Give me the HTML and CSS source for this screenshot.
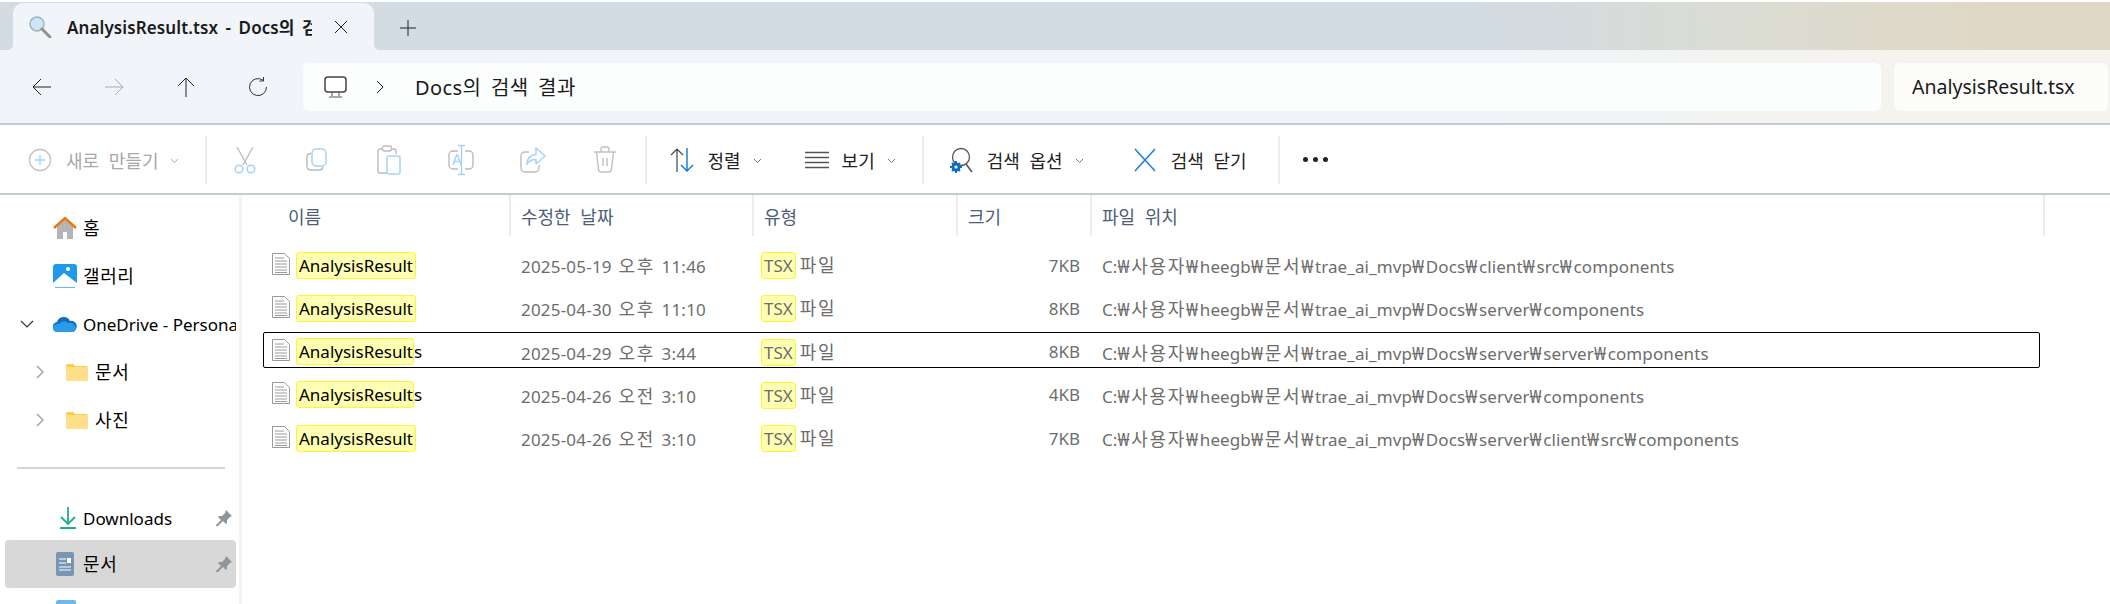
FILE: index.html
```html
<!DOCTYPE html>
<html lang="ko">
<head>
    <meta charset="UTF-8">
    <title>AnalysisResult.tsx - Docs의 검색 결과</title>
    <link rel="stylesheet" href="styles.css">
</head>
<body>
    <div class="tabbar">
        <div class="tab">
            <svg class="tab-icon" width="24" height="22" viewBox="0 0 24 22"><circle cx="9" cy="8" r="7" fill="#cfe6f5" stroke="#9fb4c2" stroke-width="1.5"/><path d="M14 13l8 8" stroke="#9a8f80" stroke-width="3" stroke-linecap="round"/></svg>
            <span class="tab-title">AnalysisResult.tsx - Docs의 검색 결과</span>
            <svg class="tab-close" width="14" height="14" viewBox="0 0 14 14"><path d="M1 1l12 12M13 1L1 13" stroke="#222" fill="none"/></svg>
        </div>
        <svg class="tab-add" width="16" height="16" viewBox="0 0 16 16"><path d="M8 0v16M0 8h16" stroke="#222" fill="none"/></svg>
    </div>

    <div class="addressbar">
        <svg class="nav-btn" width="20" height="18" viewBox="0 0 20 18"><path d="M19 9H1M9 1L1 9l8 8" stroke="#222" fill="none"/></svg>
        <svg class="nav-btn" width="20" height="18" viewBox="0 0 20 18"><path d="M1 9h18M11 1l8 8-8 8" stroke="#aaa" fill="none"/></svg>
        <svg class="nav-btn" width="20" height="20" viewBox="0 0 20 20"><path d="M10 20V1M2 9l8-8 8 8" stroke="#222" fill="none"/></svg>
        <svg class="nav-btn" width="20" height="20" viewBox="0 0 20 20"><path d="M15 3.2A8.5 8.5 0 1 0 18.5 10M15.5 0v4h-4" stroke="#333" fill="none"/></svg>
        <div class="path-box">
            <svg class="pc-icon" width="24" height="22" viewBox="0 0 24 22"><rect x="1" y="1" width="21" height="15" rx="3" fill="#fff" stroke="#444" stroke-width="1.5"/><path d="M8 16v4M15 16v4M5 21h13" stroke="#555" fill="none"/></svg>
            <svg class="crumb-arrow" width="8" height="14" viewBox="0 0 8 14"><path d="M1 1l6 6-6 6" stroke="#222" fill="none"/></svg>
            <span class="path-text">Docs의 검색 결과</span>
        </div>
        <div class="search-box">AnalysisResult.tsx</div>
    </div>

    <div class="commandbar">
        <div class="cmd new-cmd disabled">
            <svg width="24" height="24" viewBox="0 0 24 24"><circle cx="12" cy="12" r="10.5" fill="none" stroke="#c4c4c4" stroke-width="1.4"/><path d="M12 7v10M7 12h10" stroke="#a6d2f5" stroke-width="1.4"/></svg>
            <span class="cmd-label">새로 만들기</span>
            <svg class="caret" width="9" height="6" viewBox="0 0 9 6"><path d="M1 1l3.500 3.500L8 1" stroke="#aaa" fill="none"/></svg>
        </div>
        <div class="sep first-sep"></div>
        <div class="tools">
            <svg width="22" height="28" viewBox="0 0 22 28"><path d="M3 1l10 18M19 1L9 19" stroke="#bbb" stroke-width="1.3" fill="none"/><circle cx="5" cy="23" r="3.800" fill="none" stroke="#a6d2f5" stroke-width="1.5"/><circle cx="17" cy="23" r="3.800" fill="none" stroke="#a6d2f5" stroke-width="1.5"/></svg>
            <svg width="24" height="24" viewBox="0 0 24 24"><path d="M6 5.500C3 5.500 2 7 2 9v9c0 3 2 4 4 4h8c2 0 3.500-1 4-3" stroke="#bbb" stroke-width="1.4" fill="none"/><rect x="7" y="1" width="14" height="17" rx="4" fill="#fff" stroke="#a6d2f5" stroke-width="1.5"/></svg>
            <svg width="24" height="30" viewBox="0 0 24 30"><path d="M5 4H3a2 2 0 0 0-2 2v20a2 2 0 0 0 2 2h7M15 4h2a2 2 0 0 1 2 2v3" stroke="#bbb" stroke-width="1.4" fill="none"/><rect x="5.500" y="1" width="9" height="5" rx="2" fill="#fff" stroke="#bbb" stroke-width="1.3"/><rect x="10" y="11" width="13" height="18" rx="2" fill="#fff" stroke="#a6d2f5" stroke-width="1.5"/></svg>
            <svg width="26" height="32" viewBox="0 0 26 32"><path d="M10 7H5a4 4 0 0 0-4 4v10a4 4 0 0 0 4 4h5M17 7h4a4 4 0 0 1 4 4v10a4 4 0 0 1-4 4h-4" stroke="#bbb" stroke-width="1.4" fill="none"/><path d="M13.500 2v28M10 1.500h7M10 30.500h7M5 21l3.500-10h1l3.500 10M6.500 17.500h5" stroke="#a6d2f5" stroke-width="1.4" fill="none"/></svg>
            <svg width="26" height="26" viewBox="0 0 26 26"><path d="M9 5H5a4 4 0 0 0-4 4v12a4 4 0 0 0 4 4h10a4 4 0 0 0 4-4v-3" stroke="#bbb" stroke-width="1.4" fill="none"/><path d="M16 1l9 8-9 8v-4.500c-4 0-7 1-9 5 0-6 3-9.500 9-10z" fill="#fff" stroke="#a6d2f5" stroke-width="1.5" stroke-linejoin="round"/></svg>
            <svg width="24" height="27" viewBox="0 0 24 27"><path d="M1 6h22M8 6V3a2 2 0 0 1 2-2h4a2 2 0 0 1 2 2v3M3.500 6l2 17a3 3 0 0 0 3 3h7a3 3 0 0 0 3-3l2-17M10 12v8M14 12v8" stroke="#c0c0c0" stroke-width="1.4" fill="none"/></svg>
        </div>
        <div class="sep tools-sep"></div>
        <div class="cmd sort-cmd">
            <svg width="24" height="26" viewBox="0 0 24 26"><path d="M7 25V2M1 8l6-6 6 6" stroke="#444" stroke-width="1.2" fill="none"/><path d="M17 1v23M11 18l6 6 6-6" stroke="#0f78d4" stroke-width="1.4" fill="none"/></svg>
            <span class="cmd-label">정렬</span>
            <svg class="caret" width="9" height="6" viewBox="0 0 9 6"><path d="M1 1l3.500 3.500L8 1" stroke="#777" fill="none"/></svg>
        </div>
        <div class="cmd view-cmd">
            <svg width="24" height="18" viewBox="0 0 24 18"><path d="M0 1.500h24M0 6.500h24M0 11.500h24M0 16.500h24" stroke="#555" stroke-width="1.500"/></svg>
            <span class="cmd-label">보기</span>
            <svg class="caret" width="9" height="6" viewBox="0 0 9 6"><path d="M1 1l3.500 3.500L8 1" stroke="#777" fill="none"/></svg>
        </div>
        <div class="sep"></div>
        <div class="cmd options-cmd">
            <svg width="23" height="26" viewBox="0 0 23 26"><circle cx="11" cy="10" r="8.500" fill="#fff" stroke="#555" stroke-width="1.300"/><path d="M16 17l6 8" stroke="#555" stroke-width="1.500"/><circle cx="6" cy="20" r="4.500" fill="#0f6cbd"/><path d="M6 14v12M0 20h12M2 16l8 8M10 16l-8 8" stroke="#0f6cbd" stroke-width="2"/><circle cx="6" cy="20" r="1.600" fill="#fff"/></svg>
            <span class="cmd-label">검색 옵션</span>
            <svg class="caret" width="9" height="6" viewBox="0 0 9 6"><path d="M1 1l3.500 3.500L8 1" stroke="#777" fill="none"/></svg>
        </div>
        <div class="cmd close-cmd">
            <svg width="22" height="24" viewBox="0 0 22 24"><path d="M1 1l20 22M21 1L1 23" stroke="#1e82d8" stroke-width="1.600" fill="none"/></svg>
            <span class="cmd-label">검색 닫기</span>
        </div>
        <div class="sep"></div>
        <div class="more"><i></i><i></i><i></i></div>
    </div>

    <div class="main">
        <div class="sidebar">
            <div class="nav-item">
                <svg class="nav-icon" width="24" height="24" viewBox="0 0 24 24"><path d="M4 11v12h6v-7h4v7h6V11L12 3z" fill="#b5b5b5"/><path d="M1 12L12 2l11 10" fill="none" stroke="#e8740c" stroke-width="2.400"/></svg>
                <span class="nav-ko">홈</span>
            </div>
            <div class="nav-item">
                <svg class="nav-icon" width="24" height="24" viewBox="0 0 24 24"><rect x="0" y="0" width="24" height="22" rx="3" fill="#1e9be8"/><path d="M0 19l11-10 13 10v1a2 2 0 0 1-2 2H2a2 2 0 0 1-2-2z" fill="#fff"/><circle cx="15" cy="5" r="2" fill="#fff"/><path d="M2 23.500h20" stroke="#6db6e8" stroke-width="1.200"/></svg>
                <span class="nav-ko">갤러리</span>
            </div>
            <div class="nav-item">
                <svg class="nav-chevron down" width="14" height="8" viewBox="0 0 14 8"><path d="M1 1l6 6 6-6" stroke="#333" stroke-width="1.200" fill="none"/></svg>
                <svg class="nav-icon" width="24" height="18" viewBox="0 0 24 18"><path d="M5 17a5 5 0 0 1-1-9.900A7 7 0 0 1 17 6a5.500 5.500 0 0 1 6 8c-1 2-2 3-4 3z" fill="#0f6cbd"/><path d="M0 13c0-3 3-5 6-4 2-3 6-4 9-1 3-1 8 1 8 6-1 2-2 3-4 3H5c-3 0-5-1-5-4z" fill="#2b9ae8"/></svg>
                <span class="nav-clip">OneDrive - Personal</span>
            </div>
            <div class="nav-item sub">
                <svg class="nav-chevron" width="8" height="14" viewBox="0 0 8 14"><path d="M1 1l6 6-6 6" stroke="#999" stroke-width="1.200" fill="none"/></svg>
                <svg class="folder" width="22" height="17" viewBox="0 0 22 17"><path d="M0 2a2 2 0 0 1 2-2h5l2 2h11a2 2 0 0 1 2 2v11a2 2 0 0 1-2 2H2a2 2 0 0 1-2-2z" fill="#fcc94e"/><rect x="0" y="3" width="22" height="14" rx="1" fill="#ffe08a"/></svg>
                <span class="nav-ko">문서</span>
            </div>
            <div class="nav-item sub">
                <svg class="nav-chevron" width="8" height="14" viewBox="0 0 8 14"><path d="M1 1l6 6-6 6" stroke="#999" stroke-width="1.200" fill="none"/></svg>
                <svg class="folder" width="22" height="17" viewBox="0 0 22 17"><path d="M0 2a2 2 0 0 1 2-2h5l2 2h11a2 2 0 0 1 2 2v11a2 2 0 0 1-2 2H2a2 2 0 0 1-2-2z" fill="#fcc94e"/><rect x="0" y="3" width="22" height="14" rx="1" fill="#ffe08a"/></svg>
                <span class="nav-ko">사진</span>
            </div>
            <div class="nav-sep"></div>
            <div class="nav-item pinned">
                <svg class="nav-icon" width="24" height="24" viewBox="0 0 24 24"><path d="M12 1v16M5 11l7 7 7-7M4 22h16" stroke="#1eb08e" stroke-width="1.800" fill="none"/></svg>
                <span>Downloads</span>
                <svg class="pin" width="16" height="16" viewBox="0 0 16 16"><path d="M10 0l6 6-2 1-3 3v3l-1 1-3-3-5 5-2 0 0-1 5-5-3-3 1-1h3l3-3z" fill="#8d969c"/></svg>
            </div>
            <div class="nav-item pinned selected">
                <svg class="nav-icon" width="18" height="24" viewBox="0 0 18 24"><rect width="18" height="24" rx="2" fill="#7795b4"/><path d="M3 7h7M3 11h7M3 15h12M3 18h12" stroke="#fff" stroke-width="1.200"/><rect x="11" y="6" width="4" height="5" fill="#fff"/></svg>
                <span class="nav-ko">문서</span>
                <svg class="pin" width="16" height="16" viewBox="0 0 16 16"><path d="M10 0l6 6-2 1-3 3v3l-1 1-3-3-5 5-2 0 0-1 5-5-3-3 1-1h3l3-3z" fill="#8d969c"/></svg>
            </div>
            <div class="nav-item pinned">
                <svg class="nav-icon" width="20" height="24" viewBox="0 0 20 24"><rect width="20" height="24" rx="2" fill="#6fb8ea"/></svg>
            </div>
        </div>

        <div class="content">
            <div class="list-head">
                <div class="head-cell name-head">이름</div>
                <div class="head-cell">수정한 날짜</div>
                <div class="head-cell">유형</div>
                <div class="head-cell">크기</div>
                <div class="head-cell">파일 위치</div>
                <div class="head-end"></div>
            </div>
            <div class="rows">
                <div class="row">
                    <div class="cell-name"><svg class="file-icon" width="18" height="22" viewBox="0 0 18 22"><path d="M.5.500h12l5 5v16H.5z" fill="#fff" stroke="#999"/><path d="M3 5h9M3 8h12M3 11h12M3 14h12M3 17h12M3 19.500h12" stroke="#9a9a9a"/></svg><mark class="hit">AnalysisResult</mark></div>
                    <div class="cell-date">2025-05-19 <span class="ko">오후</span> 11:46</div>
                    <div class="cell-type"><mark class="hit">TSX</mark><span class="ko">파일</span></div>
                    <div class="cell-size">7KB</div>
                    <div class="cell-path">C:<span class="ko">₩사용자₩</span>heegb<span class="ko">₩문서₩</span>trae_ai_mvp<span class="ko">₩</span>Docs<span class="ko">₩</span>client<span class="ko">₩</span>src<span class="ko">₩</span>components</div>
                </div>
                <div class="row">
                    <div class="cell-name"><svg class="file-icon" width="18" height="22" viewBox="0 0 18 22"><path d="M.5.500h12l5 5v16H.5z" fill="#fff" stroke="#999"/><path d="M3 5h9M3 8h12M3 11h12M3 14h12M3 17h12M3 19.500h12" stroke="#9a9a9a"/></svg><mark class="hit">AnalysisResult</mark></div>
                    <div class="cell-date">2025-04-30 <span class="ko">오후</span> 11:10</div>
                    <div class="cell-type"><mark class="hit">TSX</mark><span class="ko">파일</span></div>
                    <div class="cell-size">8KB</div>
                    <div class="cell-path">C:<span class="ko">₩사용자₩</span>heegb<span class="ko">₩문서₩</span>trae_ai_mvp<span class="ko">₩</span>Docs<span class="ko">₩</span>server<span class="ko">₩</span>components</div>
                </div>
                <div class="row focused">
                    <div class="cell-name"><svg class="file-icon" width="18" height="22" viewBox="0 0 18 22"><path d="M.5.500h12l5 5v16H.5z" fill="#fff" stroke="#999"/><path d="M3 5h9M3 8h12M3 11h12M3 14h12M3 17h12M3 19.500h12" stroke="#9a9a9a"/></svg><mark class="hit tight">AnalysisResult</mark><span class="rest">s</span></div>
                    <div class="cell-date">2025-04-29 <span class="ko">오후</span> 3:44</div>
                    <div class="cell-type"><mark class="hit">TSX</mark><span class="ko">파일</span></div>
                    <div class="cell-size">8KB</div>
                    <div class="cell-path">C:<span class="ko">₩사용자₩</span>heegb<span class="ko">₩문서₩</span>trae_ai_mvp<span class="ko">₩</span>Docs<span class="ko">₩</span>server<span class="ko">₩</span>server<span class="ko">₩</span>components</div>
                </div>
                <div class="row">
                    <div class="cell-name"><svg class="file-icon" width="18" height="22" viewBox="0 0 18 22"><path d="M.5.500h12l5 5v16H.5z" fill="#fff" stroke="#999"/><path d="M3 5h9M3 8h12M3 11h12M3 14h12M3 17h12M3 19.500h12" stroke="#9a9a9a"/></svg><mark class="hit tight">AnalysisResult</mark><span class="rest">s</span></div>
                    <div class="cell-date">2025-04-26 <span class="ko">오전</span> 3:10</div>
                    <div class="cell-type"><mark class="hit">TSX</mark><span class="ko">파일</span></div>
                    <div class="cell-size">4KB</div>
                    <div class="cell-path">C:<span class="ko">₩사용자₩</span>heegb<span class="ko">₩문서₩</span>trae_ai_mvp<span class="ko">₩</span>Docs<span class="ko">₩</span>server<span class="ko">₩</span>components</div>
                </div>
                <div class="row">
                    <div class="cell-name"><svg class="file-icon" width="18" height="22" viewBox="0 0 18 22"><path d="M.5.500h12l5 5v16H.5z" fill="#fff" stroke="#999"/><path d="M3 5h9M3 8h12M3 11h12M3 14h12M3 17h12M3 19.500h12" stroke="#9a9a9a"/></svg><mark class="hit">AnalysisResult</mark></div>
                    <div class="cell-date">2025-04-26 <span class="ko">오전</span> 3:10</div>
                    <div class="cell-type"><mark class="hit">TSX</mark><span class="ko">파일</span></div>
                    <div class="cell-size">7KB</div>
                    <div class="cell-path">C:<span class="ko">₩사용자₩</span>heegb<span class="ko">₩문서₩</span>trae_ai_mvp<span class="ko">₩</span>Docs<span class="ko">₩</span>server<span class="ko">₩</span>client<span class="ko">₩</span>src<span class="ko">₩</span>components</div>
                </div>
            </div>
        </div>
    </div>
</body>
</html>
```

FILE: styles.css
```css
html, body {
    margin: 0;
    padding: 0;
    height: 604px;
    overflow: hidden;
    background-color: white;
    font-family: "Noto Sans", "Noto Sans CJK KR", sans-serif;
    font-size: 17px;
    color: #000;
}

svg {
    flex-shrink: 0;
    display: block;
}

/* Tab strip */
.tabbar {
    height: 48px;
    margin-top: 2px;
    display: flex;
    align-items: flex-end;
    background: linear-gradient(90deg, #d3dbe3 0, #d3dbe3 1480px, #dbdcd2 1760px, #e0d8c6 2000px);
    border-bottom: 1px solid #c6cdd2;
    box-sizing: content-box;
}

.tab {
    position: relative;
    width: 361px;
    height: 47px;
    margin-left: 13px;
    display: flex;
    align-items: center;
    background-color: #f1f4f8;
    border-radius: 10px 10px 0 0;
    box-sizing: border-box;
}

.tab::before, .tab::after {
    content: "";
    position: absolute;
    bottom: 0;
    width: 6px;
    height: 6px;
}

.tab::before {
    left: -6px;
    background: radial-gradient(circle at 0 0, transparent 6px, #f1f4f8 6.5px);
}

.tab::after {
    right: -6px;
    background: radial-gradient(circle at 100% 0, transparent 6px, #f1f4f8 6.5px);
}

.tab-icon {
    margin-left: 15px;
}

.tab-title {
    width: 245px;
    margin-left: 15px;
    overflow: hidden;
    white-space: nowrap;
    font-size: 17px;
    font-weight: 600;
    letter-spacing: .1px;
    word-spacing: 3px;
    color: #1a1a1a;
}

.tab-close {
    margin-left: 22px;
}

.tab-add {
    margin: 0 0 14px 26px;
}

/* Address row */
.addressbar {
    height: 73px;
    padding-left: 32px;
    display: flex;
    align-items: center;
    background: linear-gradient(90deg, #f1f4f8 0, #f1f4f8 1500px, #f5f3ee 1900px);
    border-bottom: 2px solid #c1ccd3;
    box-sizing: content-box;
    margin-top: -1px;
}

.nav-btn {
    margin-right: 52px;
}

.path-box {
    width: 1578px;
    height: 48px;
    margin-left: -17px;
    display: flex;
    align-items: center;
    background-color: #fcfdfd;
    border-radius: 6px;
}

.pc-icon {
    margin-left: 21px;
}

.crumb-arrow {
    margin-left: 28px;
}

.path-text {
    margin-left: 31px;
    font-size: 20px;
    word-spacing: 4px;
    letter-spacing: .4px;
    color: #1a1a1a;
}

.search-box {
    width: 214px;
    height: 48px;
    margin-left: 13px;
    padding-left: 18px;
    display: flex;
    align-items: center;
    background-color: #fcfcfb;
    border-radius: 6px;
    font-size: 19.5px;
    color: #1a1a1a;
    box-sizing: border-box;
}

/* Command bar */
.commandbar {
    height: 70px;
    padding-top: 1px;
    box-sizing: border-box;
    display: flex;
    align-items: center;
    border-bottom: 2px solid #c1ccd3;
    color: #222;
}

.cmd {
    display: flex;
    align-items: center;
}

.cmd-label {
    font-size: 18px;
    word-spacing: 5px;
    white-space: nowrap;
}

.disabled {
    color: #a8a8a8;
}

.caret {
    margin-top: 2px;
    margin-left: 12px;
}

.new-cmd {
    margin-left: 28px;
}

.new-cmd .cmd-label {
    margin-left: 14px;
}

.sep {
    width: 2px;
    height: 48px;
    background-color: #ececec;
}

.first-sep {
    margin-left: 26px;
    margin-right: 2px;
}

.tools {
    display: grid;
    grid-template-columns: repeat(6, 72px);
    justify-items: center;
    align-items: center;
}

.tools-sep {
    margin-left: 4px;
}

.sort-cmd {
    margin-left: 23px;
}

.sort-cmd .cmd-label {
    margin-left: 13px;
}

.view-cmd {
    margin-left: 43px;
    margin-right: 26px;
}

.view-cmd .cmd-label {
    margin-left: 13px;
}

.options-cmd {
    margin-left: 26px;
}

.options-cmd .cmd-label {
    margin-left: 14px;
}

.close-cmd {
    margin-left: 50px;
    margin-right: 31px;
}

.close-cmd .cmd-label {
    margin-left: 15px;
}

.more {
    margin-left: 23px;
    display: flex;
    gap: 5px;
}

.more i {
    width: 5px;
    height: 5px;
    border-radius: 50%;
    background-color: #222;
}

/* Sidebar */
.main {
    display: flex;
    height: 409px;
}

.sidebar {
    width: 239px;
    padding-top: 9px;
    border-right: 3px solid #f4f4f4;
    flex-shrink: 0;
    overflow: hidden;
}

.nav-item {
    position: relative;
    height: 48px;
    margin: 0 3px 0 5px;
    padding-left: 48px;
    display: flex;
    align-items: center;
    border-radius: 4px;
    flex-shrink: 0;
}

.nav-item > span {
    position: absolute;
    left: 78px;
    white-space: nowrap;
}

.nav-item > .nav-ko {
    font-size: 18px;
    letter-spacing: .6px;
    margin-top: -2px;
}

.nav-item .nav-clip {
    width: 153px;
    overflow: hidden;
}

.nav-chevron {
    position: absolute;
    left: 31px;
}

.nav-chevron.down {
    left: 15px;
}

.nav-item.sub > span {
    left: 90px;
}

.folder {
    margin-left: 13px;
}

.nav-sep {
    height: 2px;
    margin: 23px 14px 25px 17px;
    background-color: #d6d6d6;
}

.pinned .nav-icon {
    margin-left: 3px;
}

.pin {
    position: absolute;
    right: 4px;
}

.selected {
    background-color: #d8d8d8;
    margin-top: -2px;
}

/* File list */
.content {
    flex: 1;
    min-width: 0;
}

.list-head {
    height: 41px;
    display: grid;
    grid-template-columns: 269px 243px 204px 134px 953px 1fr;
    color: #4c607a;
    font-size: 18px;
    word-spacing: 5px;
}

.head-cell {
    display: flex;
    align-items: center;
    padding-left: 10px;
    border-right: 2px solid #ececec;
    box-sizing: border-box;
    white-space: pre;
}

.name-head {
    padding-left: 46px;
}

.head-end {
    border-right: 0;
}

.rows {
    margin: 9.5px 0 0 21px;
    width: 1777px;
    display: flex;
    flex-direction: column;
    gap: 7.25px;
}

.row {
    height: 36px;
    padding-top: 3px;
    display: grid;
    grid-template-columns: 247px 243px 204px 134px 1fr;
    align-items: center;
    border: 1px solid transparent;
    border-radius: 2px;
    box-sizing: border-box;
    color: #6d6d6d;
}

.focused {
    border-color: #000;
}

/* hangul and the won sign run wider than the latin text beside them */
.ko {
    font-size: 18px;
    letter-spacing: 1.7px;
}

.cell-name {
    display: flex;
    align-items: center;
    color: #000;
}

.file-icon {
    margin: -3px 6px 0 8px;
}

.hit {
    height: 27px;
    line-height: 25px;
    padding: 0 2px;
    background-color: #ffffb3;
    border: 1px solid #f8f830;
    border-radius: 3px;
    box-sizing: border-box;
    color: inherit;
    display: inline-block;
}

.tight {
    padding-right: 0;
}

.cell-date {
    padding-left: 10px;
    white-space: nowrap;
    letter-spacing: .2px;
    word-spacing: 2px;
}

.cell-type {
    padding-left: 7px;
    white-space: nowrap;
}

.cell-type .ko {
    margin-left: 4px;
}

.cell-size {
    padding-right: 12px;
    text-align: right;
}

.cell-path {
    padding-left: 10px;
    white-space: nowrap;
    letter-spacing: .1px;
}
```
